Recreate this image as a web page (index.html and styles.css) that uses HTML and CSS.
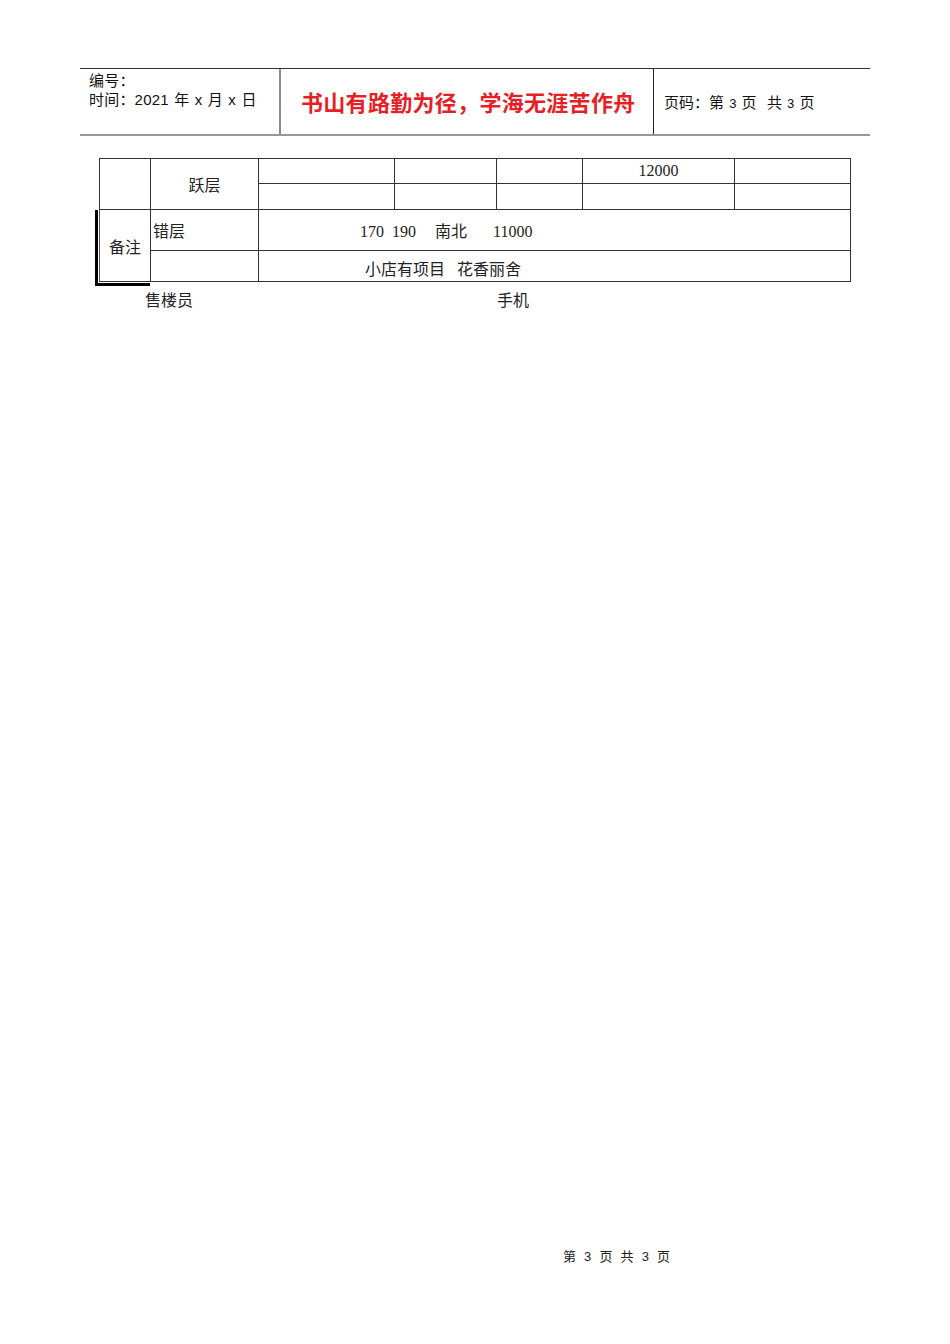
FILE: index.html
```html
<!DOCTYPE html>
<html lang="zh">
<head>
<meta charset="utf-8">
<title>页码</title>
<link rel="stylesheet" href="styles.css">
</head>
<body>
<div class="page">
  <div class="header">
    <div class="h-left">
      <div class="h-line">编号：</div>
      <div class="h-line">时间：2021 年 x 月 x 日</div>
    </div>
    <div class="h-mid">书山有路勤为径，学海无涯苦作舟</div>
    <div class="h-right">页码：第 <span class="num">3</span> 页&nbsp; 共 <span class="num">3</span> 页</div>
  </div>

  <table class="grid">
    <colgroup>
      <col class="c1"><col class="c2"><col class="c3"><col class="c4"><col class="c5"><col class="c6"><col class="c7">
    </colgroup>
    <tr class="r1">
      <td rowspan="2"></td>
      <td rowspan="2" class="center">跃层</td>
      <td></td><td></td><td></td><td class="center">12000</td><td></td>
    </tr>
    <tr class="r2">
      <td></td><td></td><td></td><td></td><td></td>
    </tr>
    <tr class="r3">
      <td rowspan="2" class="note"><span class="note-text">备注</span></td>
      <td class="left">错层</td>
      <td colspan="5" class="info"><span>170</span><span class="g1">190</span><span class="g2">南北</span><span class="g3">11000</span></td>
    </tr>
    <tr class="r4">
      <td></td>
      <td colspan="5" class="info2"><span>小店有项目</span><span class="g4">花香丽舍</span></td>
    </tr>
  </table>

  <div class="below">
    <span class="seller">售楼员</span>
    <span class="phone">手机</span>
  </div>

  <div class="footer">第&nbsp; 3&nbsp; 页&nbsp; 共&nbsp; 3&nbsp; 页</div>
</div>
</body>
</html>
```

FILE: styles.css
```css
html, body {
  margin: 0;
  padding: 0;
  background: #ffffff;
}

.page {
  width: 950px;
  height: 1344px;
  display: flex;
  flex-direction: column;
  box-sizing: border-box;
  padding-top: 68px;
}

.header {
  margin-left: 80px;
  width: 790px;
  height: 68px;
  box-sizing: border-box;
  border-top: 1px solid #333333;
  border-bottom: 2px solid #999999;
  display: flex;
  font-family: "Liberation Sans", "Noto Sans CJK SC", sans-serif;
  color: #111111;
}

.h-left {
  width: 201px;
  box-sizing: border-box;
  border-right: 2px solid #8c8c8c;
  padding: 2px 0 0 9px;
  font-size: 15px;
  line-height: 19px;
  word-spacing: 1px;
  letter-spacing: 0.2px;
}

.h-mid {
  width: 373px;
  box-sizing: border-box;
  border-right: 1px solid #222222;
  color: #e61e25;
  font-size: 22px;
  font-weight: 700;
  letter-spacing: 0.3px;
  padding: 22px 0 0 20px;
  line-height: 26px;
  white-space: nowrap;
}

.h-right {
  flex: 1;
  font-size: 15px;
  padding: 24px 0 0 10px;
  line-height: 20px;
  white-space: nowrap;
  word-spacing: 1px;
}

.h-right .num {
  font-size: 13px;
}

.grid {
  margin-top: 22px;
  margin-left: 99px;
  border-collapse: collapse;
  table-layout: fixed;
  width: 752px;
  font-family: "Liberation Serif", "Noto Sans CJK SC", serif;
  font-size: 16px;
  color: #222222;
}

.grid td {
  border: 1px solid #333333;
  padding: 0;
  white-space: nowrap;
}

.c1 { width: 51px; }
.c2 { width: 108px; }
.c3 { width: 136px; }
.c4 { width: 102px; }
.c5 { width: 86px; }
.c6 { width: 152px; }
.c7 { width: 116px; }

.r1 { height: 25px; }
.r2 { height: 26px; }
.r3 { height: 41px; }
.r4 { height: 31px; }

.center { text-align: center; }
.left { padding-left: 2px !important; }

.note {
  position: relative;
  text-align: center;
  border-left: 1px solid #555555 !important;
}

.note::before {
  content: "";
  position: absolute;
  left: -5px;
  top: 0;
  width: 3px;
  height: calc(100% + 5px);
  background: #000000;
}

.note::after {
  content: "";
  position: absolute;
  left: -5px;
  bottom: -5px;
  width: calc(100% + 5px);
  height: 3px;
  background: #000000;
}

.info {
  padding-left: 101px !important;
}

.info2 {
  padding-left: 106px !important;
  padding-top: 4px !important;
}

.g1 { margin-left: 8px; }
.g2 { margin-left: 19px; }
.g3 { margin-left: 26px; }
.g4 { margin-left: 12px; }

.below {
  display: flex;
  margin-top: 8px;
  font-family: "Liberation Serif", "Noto Sans CJK SC", serif;
  font-size: 16px;
  line-height: 22px;
  color: #222222;
}

.seller {
  margin-left: 145px;
}

.phone {
  margin-left: 304px;
}

.footer {
  margin-top: auto;
  margin-bottom: 78px;
  padding-left: 563px;
  font-family: "Liberation Sans", "Noto Sans CJK SC", sans-serif;
  font-size: 13px;
  line-height: 18px;
  color: #222222;
  white-space: nowrap;
  letter-spacing: 0.3px;
}
```
